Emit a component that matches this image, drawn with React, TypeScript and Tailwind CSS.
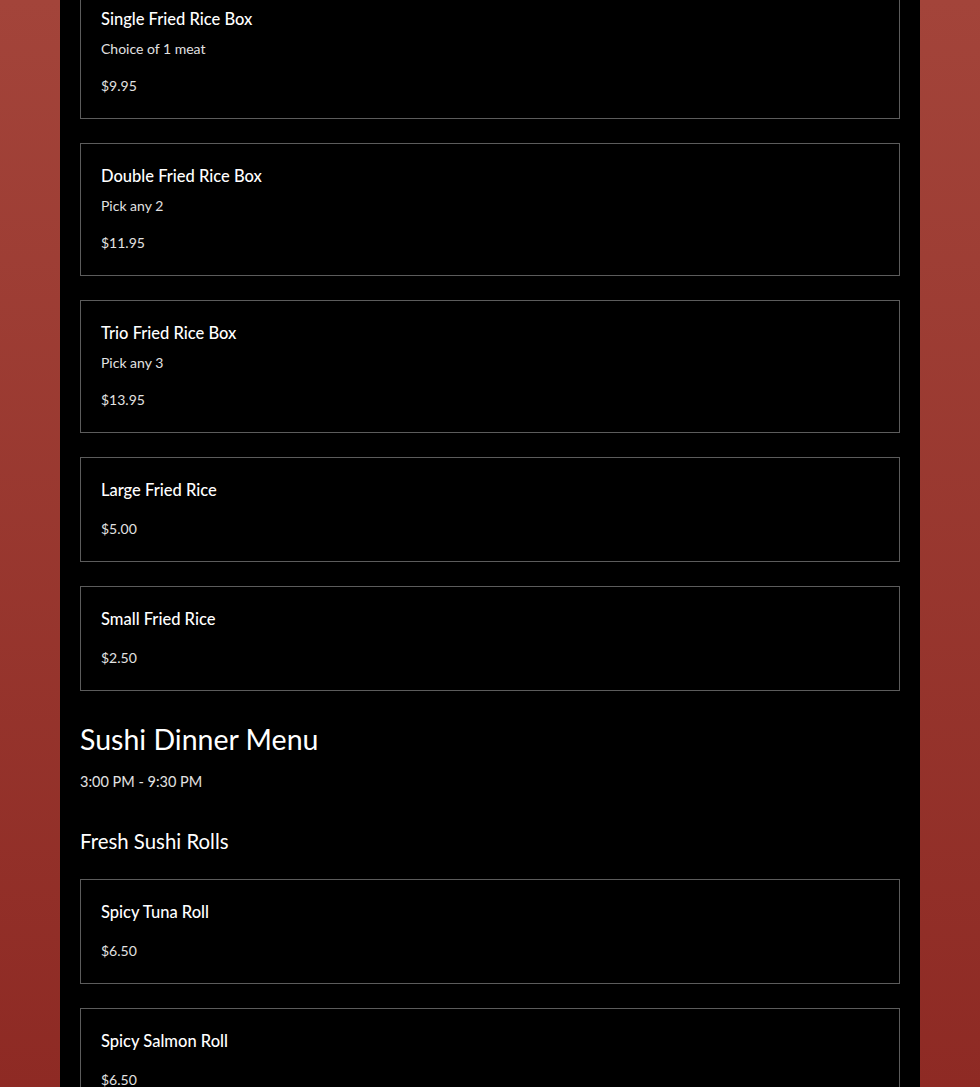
import React from 'react';

type Item = {
    name: string;
    desc?: string;
    price: string;
};

const friedRice: Item[] = [
    { name: 'Single Fried Rice Box', desc: 'Choice of 1 meat', price: '$9.95' },
    { name: 'Double Fried Rice Box', desc: 'Pick any 2', price: '$11.95' },
    { name: 'Trio Fried Rice Box', desc: 'Pick any 3', price: '$13.95' },
    { name: 'Large Fried Rice', price: '$5.00' },
    { name: 'Small Fried Rice', price: '$2.50' },
];

const sushiRolls: Item[] = [
    { name: 'Spicy Tuna Roll', price: '$6.50' },
    { name: 'Spicy Salmon Roll', price: '$6.50' },
];

function MenuCard({ item }: { item: Item }) {
    return (
        <div className="border border-[#5c5c5c] px-[20px] pt-[20px] pb-[21px]">
            <h3 className="text-[16.5px] leading-[24px] font-medium text-white">{item.name}</h3>
            {item.desc && (
                <p className="mt-[8px] text-[14px] leading-[20px] text-[#e2e2e2]">{item.desc}</p>
            )}
            <p className="mt-[16px] text-[14px] leading-[22px] text-[#e2e2e2]">{item.price}</p>
        </div>
    );
}

export default function App() {
    return (
        <div
            className="h-[1087px] overflow-hidden bg-gradient-to-b from-[#a3443a] to-[#8e2a24]"
            style={{ fontFamily: 'Lato, "Open Sans", sans-serif' }}
        >
            <div className="mx-auto flex h-full w-[860px] flex-col bg-black px-[20px]">
                {/* Fried rice section (scrolled, top card cut off) */}
                <div className="-mt-[14px] flex flex-col gap-[24px]">
                    {friedRice.map((item) => (
                        <MenuCard key={item.name} item={item} />
                    ))}
                </div>

                {/* Sushi dinner menu */}
                <h1 className="mt-[30px] text-[28.5px] leading-[36px] text-white">Sushi Dinner Menu</h1>
                <p className="mt-[14px] text-[14.5px] leading-[22px] text-[#e2e2e2]">3:00 PM - 9:30 PM</p>

                <h2 className="mt-[34px] text-[20.4px] leading-[28px] text-white">Fresh Sushi Rolls</h2>

                <div className="mt-[24px] flex flex-col gap-[24px]">
                    {sushiRolls.map((item) => (
                        <MenuCard key={item.name} item={item} />
                    ))}
                </div>
            </div>
        </div>
    );
}
